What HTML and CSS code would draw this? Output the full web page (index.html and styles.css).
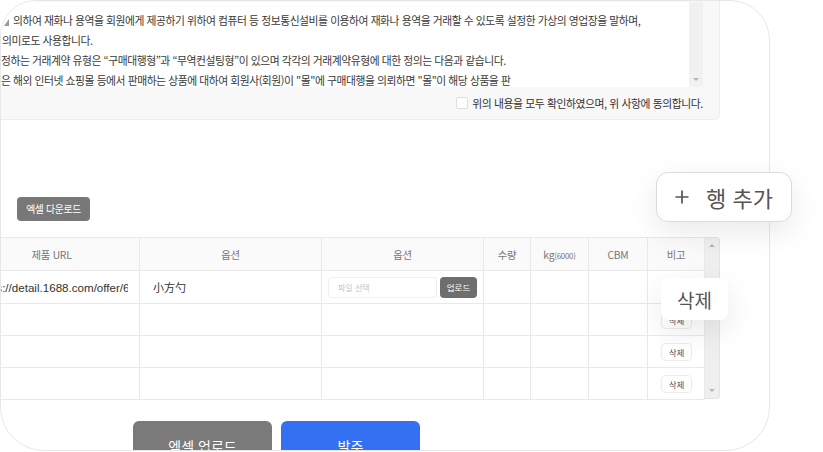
FILE: index.html
```html
<!DOCTYPE html>
<html lang="ko">
<head>
<meta charset="utf-8">
<title>발주</title>
<link rel="stylesheet" href="styles.css">
</head>
<body>
<div class="stage">
  <div class="card">
    <div class="agree">
      <div class="terms">
        <div class="terms-text">
          <p class="l1"><span class="nub"></span>의하여 재화나 용역을 회원에게 제공하기 위하여 컴퓨터 등 정보통신설비를 이용하여 재화나 용역을 거래할 수 있도록 설정한 가상의 영업장을 말하며,</p>
          <p class="l2">의미로도 사용합니다.</p>
          <p class="l3">정하는 거래계약 유형은 “구매대행형”과 “무역컨설팅형”이 있으며 각각의 거래계약유형에 대한 정의는 다음과 같습니다.</p>
          <p class="l4">은 해외 인터넷 쇼핑몰 등에서 판매하는 상품에 대하여 회원사(회원)이 "몰"에 구매대행을 의뢰하면 "몰"이 해당 상품을 판</p>
        </div>
        <div class="vscroll"><span class="arr-down"></span></div>
      </div>
      <label class="agree-row"><span class="check"></span>위의 내용을 모두 확인하였으며, 위 사항에 동의합니다.</label>
    </div>

    <div class="tools"><button class="btn-dl">엑셀 다운로드</button></div>

    <div class="grid-wrap">
      <table class="grid">
        <colgroup>
          <col class="c1"><col class="c2"><col class="c3"><col class="c4"><col class="c5"><col class="c6"><col class="c7">
        </colgroup>
        <thead>
          <tr>
            <th>제품 URL</th>
            <th>옵션</th>
            <th>옵션</th>
            <th>수량</th>
            <th>kg<small>(6000)</small></th>
            <th>CBM</th>
            <th>비고</th>
          </tr>
        </thead>
        <tbody>
          <tr class="r1">
            <td class="url-cell"><div class="url">https://detail.1688.com/offer/68</div></td>
            <td class="opt">小方勺</td>
            <td class="file-cell"><div class="file"><span class="file-input">파일 선택</span><button class="btn-upl">업로드</button></div></td>
            <td></td><td></td><td></td>
            <td class="del-cell"></td>
          </tr>
          <tr>
            <td></td><td></td><td></td><td></td><td></td><td></td>
            <td class="del-cell"><button class="btn-del">삭제</button></td>
          </tr>
          <tr>
            <td></td><td></td><td></td><td></td><td></td><td></td>
            <td class="del-cell"><button class="btn-del">삭제</button></td>
          </tr>
          <tr>
            <td></td><td></td><td></td><td></td><td></td><td></td>
            <td class="del-cell"><button class="btn-del">삭제</button></td>
          </tr>
        </tbody>
      </table>
      <div class="tscroll"><span class="arr-up"></span><span class="arr-down"></span></div>
    </div>

    <div class="actions">
      <button class="btn-big btn-up">엑셀 업로드</button>
      <button class="btn-big btn-order">발주</button>
    </div>
  </div>

  <div class="pop pop-add">
    <svg class="plus" width="14" height="14" viewBox="0 0 14 14" aria-hidden="true"><path d="M7 0.5v13M0.5 7h13" stroke="#555" stroke-width="1.7" fill="none"/></svg>
    <span>행 추가</span>
  </div>
  <div class="pop pop-del">삭제</div>
</div>
</body>
</html>
```

FILE: styles.css
```css
* { box-sizing: border-box; }

body {
  margin: 0;
  background: #ffffff;
  font-family: "Noto Sans CJK KR", "Noto Sans", sans-serif;
}

.stage {
  position: relative;
  width: 823px;
  height: 452px;
  overflow: hidden;
}

.card {
  width: 770px;
  height: 451px;
  border: 1px solid #e7e7e7;
  border-radius: 36px 40px 44px 44px;
  overflow: hidden;
  background: #fff;
}

/* agreement box */
.agree {
  width: 719px;
  padding-top: 1px;
  background: #f8f8f8;
  border-bottom: 1px solid #ededed;
  border-right: 1px solid #ededed;
  border-radius: 0 0 6px 0;
}

.terms {
  display: flex;
  height: 85px;
  margin-right: 16px;
  background: #fff;
  border-radius: 0 0 4px 0;
  overflow: hidden;
}

.terms-text {
  flex: 1;
  overflow: hidden;
  padding-top: 8px;
  font-size: 10.8px;
  letter-spacing: -0.45px;
  line-height: 20px;
  color: #393939;
  white-space: nowrap;
}

.terms-text p { margin: 0; }
.l1 { padding-left: 3px; }
.l2 { padding-left: 1px; }
.l3 { margin-left: -5px; }
.l4 { padding-left: 0; }

.nub {
  display: inline-block;
  width: 0;
  height: 0;
  border-left: 5px solid transparent;
  border-bottom: 7px solid #9a9a9a;
  margin-right: 4px;
  vertical-align: -1px;
}

.vscroll {
  width: 14px;
  background: #f1f1f1;
  display: flex;
  flex-direction: column;
  justify-content: flex-end;
  align-items: center;
  padding-bottom: 6px;
}

.arr-down, .arr-up {
  display: block;
  width: 0;
  height: 0;
  border-left: 3px solid transparent;
  border-right: 3px solid transparent;
}
.arr-down { border-top: 3px solid #b5b5b5; }
.arr-up { border-bottom: 3px solid #b5b5b5; }

.agree-row {
  height: 32px;
  display: flex;
  align-items: center;
  justify-content: flex-end;
  padding-right: 16px;
  font-size: 10.8px;
  letter-spacing: -0.4px;
  color: #333;
}

.check {
  width: 12px;
  height: 12px;
  border: 1px solid #dedede;
  border-radius: 2px;
  background: #fff;
  margin-right: 4px;
}

/* tools */
.tools {
  margin-top: 77px;
  padding-left: 16px;
}

.btn-dl {
  display: block;
  width: 73px;
  height: 24px;
  padding: 0;
  border: 0;
  border-radius: 4px;
  background: #787878;
  color: #fff;
  font-family: inherit;
  font-size: 9.8px;
  letter-spacing: -0.3px;
}

/* grid */
.grid-wrap {
  display: flex;
  margin-top: 16px;
  margin-left: -38px;
}

.grid {
  width: 741px;
  table-layout: fixed;
  border-collapse: collapse;
  border-top: 1px solid #e3e3e3;
  border-bottom: 1px solid #e3e3e3;
}

.c1 { width: 176px; }
.c2 { width: 182px; }
.c3 { width: 162px; }
.c4 { width: 47px; }
.c5 { width: 58px; }
.c6 { width: 59px; }
.c7 { width: 57px; }

.grid th,
.grid td {
  border: 1px solid #e9e9e9;
  padding: 0;
}

.grid th {
  height: 33px;
  background: #fafafa;
  font-weight: normal;
  font-size: 10.3px;
  color: #777;
  letter-spacing: -0.2px;
}

.grid th small {
  font-size: 8px;
  color: #777;
  letter-spacing: -0.3px;
}

.grid td { height: 32px; }
.grid .r1 td { height: 33px; }

.url-cell { padding: 0 11px 0 13px !important; }

.url {
  overflow: hidden;
  white-space: nowrap;
  font-family: "Liberation Sans", Arial, sans-serif;
  font-size: 11.6px;
  color: #333;
}

.opt {
  padding-left: 13px !important;
  font-family: "Noto Sans CJK SC", sans-serif;
  font-size: 11px;
  color: #333;
}

.file-cell { padding: 0 6px !important; }

.file {
  display: flex;
  align-items: center;
  gap: 3px;
}

.file-input {
  width: 109px;
  height: 21px;
  border: 1px solid #f0f0f0;
  border-radius: 3px;
  padding-left: 9px;
  font-size: 8px;
  line-height: 19px;
  color: #c4c4c4;
}

.btn-upl {
  width: 37px;
  height: 21px;
  padding: 0;
  border: 0;
  border-radius: 4px;
  background: #6e6e6e;
  color: #fff;
  font-family: inherit;
  font-size: 8.5px;
}

.del-cell { padding-left: 13px !important; }

.btn-del {
  display: block;
  width: 31px;
  height: 18px;
  padding: 0;
  border: 1px solid #ececec;
  border-radius: 4px;
  background: #fff;
  color: #555;
  font-family: inherit;
  font-size: 8.5px;
}

.tscroll {
  width: 15px;
  height: 162px;
  background: #efefef;
  border: 1px solid #e3e3e3;
  border-left: 0;
  border-radius: 0 4px 4px 0;
  display: flex;
  flex-direction: column;
  justify-content: space-between;
  align-items: center;
  padding: 6px 0;
}

/* bottom actions */
.actions {
  display: flex;
  gap: 9px;
  margin-top: 21px;
  padding-left: 132px;
}

.btn-big {
  width: 139px;
  height: 50px;
  border: 0;
  border-radius: 6px;
  color: #fff;
  font-family: inherit;
  font-size: 14px;
  padding: 0;
}

.btn-up { background: #7a7a7a; }
.btn-order { background: #3370f2; }

/* overlays */
.pop {
  position: absolute;
  display: flex;
  align-items: center;
  justify-content: center;
  background: #fff;
  color: #555;
  box-shadow: 0 10px 30px rgba(0, 0, 0, 0.09);
}

.pop-add {
  left: 656px;
  top: 172px;
  width: 136px;
  height: 50px;
  border: 1px solid #dcdcdc;
  border-radius: 12px;
  font-size: 22px;
  gap: 17px;
}

.plus { display: block; }

.pop-del {
  left: 661px;
  top: 278px;
  width: 67px;
  height: 42px;
  border-radius: 8px;
  font-size: 19px;
}
```
